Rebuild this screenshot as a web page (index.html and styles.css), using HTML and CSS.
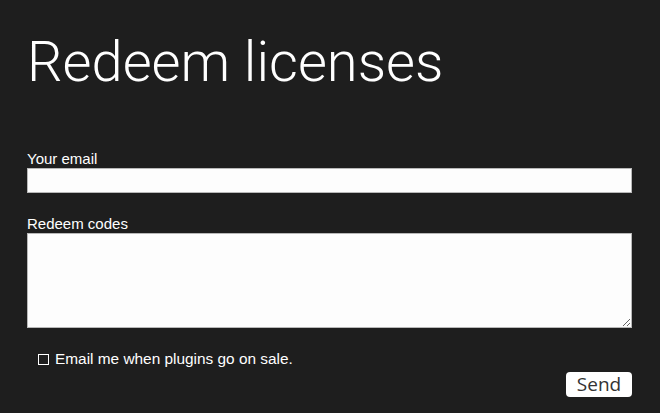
FILE: index.html
```html
<!DOCTYPE html>
<html lang="en">
  <head>
    <meta charset="UTF-8" />
    <meta name="viewport" content="width=device-width, initial-scale=1.0" />
    <title>Redeem licenses</title>
    <link rel="stylesheet" href="styles.css">
  </head>
  <body>
    <main>
      <h1>Redeem licenses</h1>
      <form class="redeem">
        <label class="felt">
          <span>Your email</span>
          <input type="email" class="email" />
        </label>
        <label class="felt">
          <span>Redeem codes</span>
          <textarea class="koder"></textarea>
        </label>
        <label class="nyhed">
          <input type="checkbox" />
          <span>Email me when plugins go on sale.</span>
        </label>
        <div class="knap">
          <button type="button">Send</button>
        </div>
      </form>
    </main>
  </body>
</html>
```

FILE: styles.css
```css
* {
  margin: 0px;
  padding: 0px;
  box-sizing: border-box;
}

body {
  background-color: #1e1e1e;
  color: #ffffff;
  font-family: "Liberation Sans", Arial, sans-serif;
}

main {
  padding: 0 28px 0 27px;
}

h1 {
  font-family: "Roboto", sans-serif;
  font-weight: 300;
  font-size: 56px;
  line-height: 60px;
  padding-top: 32px;
  margin-bottom: 58px;
}

/* Felterne */
.felt {
  display: flex;
  flex-direction: column;
  font-size: 15px;
}

.felt span {
  line-height: 18px;
}

.email {
  height: 25px;
  border: 1px solid #b8b8b8;
  background-color: #fdfdfd;
  margin-bottom: 22px;
}

.koder {
  height: 95px;
  border: 1px solid #b8b8b8;
  background-color: #fdfdfd;
  resize: vertical;
}

/* Nyhedsbrev */
.nyhed {
  display: flex;
  align-items: center;
  gap: 6px;
  font-size: 15.4px;
  margin-top: 22px;
  padding-left: 11px;
}

.nyhed input {
  appearance: none;
  width: 11px;
  height: 11px;
  border: 1px solid #ffffff;
  background: transparent;
}

.knap {
  display: flex;
  justify-content: flex-end;
  margin-top: 4px;
}

.knap button {
  font-family: "Open Sans", sans-serif;
  font-size: 19px;
  color: #333333;
  background-color: #ffffff;
  border: none;
  border-radius: 4px;
  width: 66px;
  height: 25px;
  line-height: 25px;
}
```
